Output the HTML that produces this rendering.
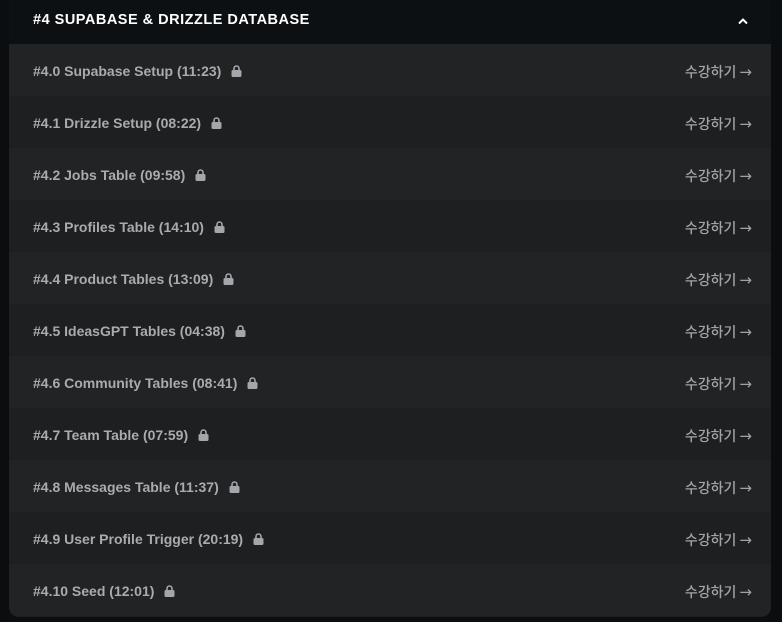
<!DOCTYPE html>
<html><head><meta charset="utf-8"><style>
html,body{margin:0;padding:0;background:#0b0e11;width:782px;height:622px;overflow:hidden}
.box{position:absolute;left:9px;top:-10px;width:762px;height:627px;border-radius:10px;overflow:hidden;background:#1e1f21}
.hd{height:54px;background:#0d1013;position:relative}
.hd span{position:absolute;left:24px;top:22px;color:#fff;font:700 14.5px "Liberation Sans",sans-serif;letter-spacing:.5px}
.hd svg{position:absolute;right:22px;top:27px}
.row{height:52px;position:relative;font:600 14px "Liberation Sans","Noto Sans CJK KR",sans-serif;color:#a8abb0}
.row:nth-child(odd){background:#222324}
.row:nth-child(even){background:#1e1f21}
.row .t{position:absolute;left:24px;top:19px;display:flex;align-items:center}
.row .t svg{margin-left:10px}
.row .r{position:absolute;right:19px;top:18px;color:#a0a3a8;font-weight:500}
.row .r b{font:400 15px "DejaVu Sans",sans-serif;margin-left:3px}
</style></head><body>
<div class="box">
<div class="hd"><span>#4 SUPABASE &amp; DRIZZLE DATABASE</span><svg width="12" height="8" viewBox="0 0 12 8"><path d="M2 6.5 L6 2.5 L10 6.5" stroke="#fff" stroke-width="2" fill="none"/></svg></div>
<div>
<div class="row"><div class="t">#4.0 Supabase Setup (11:23)<svg width="11" height="12" viewBox="0 0 11 12"><path d="M3 5V3.5a2.5 2.5 0 0 1 5 0V5" stroke="#a3a6ab" stroke-width="1.6" fill="none"/><rect x="0.5" y="5" width="10" height="7" rx="1.5" fill="#a3a6ab"/></svg></div><div class="r">수강하기<b>→</b></div></div>
<div class="row"><div class="t">#4.1 Drizzle Setup (08:22)<svg width="11" height="12" viewBox="0 0 11 12"><path d="M3 5V3.5a2.5 2.5 0 0 1 5 0V5" stroke="#a3a6ab" stroke-width="1.6" fill="none"/><rect x="0.5" y="5" width="10" height="7" rx="1.5" fill="#a3a6ab"/></svg></div><div class="r">수강하기<b>→</b></div></div>
<div class="row"><div class="t">#4.2 Jobs Table (09:58)<svg width="11" height="12" viewBox="0 0 11 12"><path d="M3 5V3.5a2.5 2.5 0 0 1 5 0V5" stroke="#a3a6ab" stroke-width="1.6" fill="none"/><rect x="0.5" y="5" width="10" height="7" rx="1.5" fill="#a3a6ab"/></svg></div><div class="r">수강하기<b>→</b></div></div>
<div class="row"><div class="t">#4.3 Profiles Table (14:10)<svg width="11" height="12" viewBox="0 0 11 12"><path d="M3 5V3.5a2.5 2.5 0 0 1 5 0V5" stroke="#a3a6ab" stroke-width="1.6" fill="none"/><rect x="0.5" y="5" width="10" height="7" rx="1.5" fill="#a3a6ab"/></svg></div><div class="r">수강하기<b>→</b></div></div>
<div class="row"><div class="t">#4.4 Product Tables (13:09)<svg width="11" height="12" viewBox="0 0 11 12"><path d="M3 5V3.5a2.5 2.5 0 0 1 5 0V5" stroke="#a3a6ab" stroke-width="1.6" fill="none"/><rect x="0.5" y="5" width="10" height="7" rx="1.5" fill="#a3a6ab"/></svg></div><div class="r">수강하기<b>→</b></div></div>
<div class="row"><div class="t">#4.5 IdeasGPT Tables (04:38)<svg width="11" height="12" viewBox="0 0 11 12"><path d="M3 5V3.5a2.5 2.5 0 0 1 5 0V5" stroke="#a3a6ab" stroke-width="1.6" fill="none"/><rect x="0.5" y="5" width="10" height="7" rx="1.5" fill="#a3a6ab"/></svg></div><div class="r">수강하기<b>→</b></div></div>
<div class="row"><div class="t">#4.6 Community Tables (08:41)<svg width="11" height="12" viewBox="0 0 11 12"><path d="M3 5V3.5a2.5 2.5 0 0 1 5 0V5" stroke="#a3a6ab" stroke-width="1.6" fill="none"/><rect x="0.5" y="5" width="10" height="7" rx="1.5" fill="#a3a6ab"/></svg></div><div class="r">수강하기<b>→</b></div></div>
<div class="row"><div class="t">#4.7 Team Table (07:59)<svg width="11" height="12" viewBox="0 0 11 12"><path d="M3 5V3.5a2.5 2.5 0 0 1 5 0V5" stroke="#a3a6ab" stroke-width="1.6" fill="none"/><rect x="0.5" y="5" width="10" height="7" rx="1.5" fill="#a3a6ab"/></svg></div><div class="r">수강하기<b>→</b></div></div>
<div class="row"><div class="t">#4.8 Messages Table (11:37)<svg width="11" height="12" viewBox="0 0 11 12"><path d="M3 5V3.5a2.5 2.5 0 0 1 5 0V5" stroke="#a3a6ab" stroke-width="1.6" fill="none"/><rect x="0.5" y="5" width="10" height="7" rx="1.5" fill="#a3a6ab"/></svg></div><div class="r">수강하기<b>→</b></div></div>
<div class="row"><div class="t">#4.9 User Profile Trigger (20:19)<svg width="11" height="12" viewBox="0 0 11 12"><path d="M3 5V3.5a2.5 2.5 0 0 1 5 0V5" stroke="#a3a6ab" stroke-width="1.6" fill="none"/><rect x="0.5" y="5" width="10" height="7" rx="1.5" fill="#a3a6ab"/></svg></div><div class="r">수강하기<b>→</b></div></div>
<div class="row"><div class="t">#4.10 Seed (12:01)<svg width="11" height="12" viewBox="0 0 11 12"><path d="M3 5V3.5a2.5 2.5 0 0 1 5 0V5" stroke="#a3a6ab" stroke-width="1.6" fill="none"/><rect x="0.5" y="5" width="10" height="7" rx="1.5" fill="#a3a6ab"/></svg></div><div class="r">수강하기<b>→</b></div></div>
</div>
</div>
</body></html>
